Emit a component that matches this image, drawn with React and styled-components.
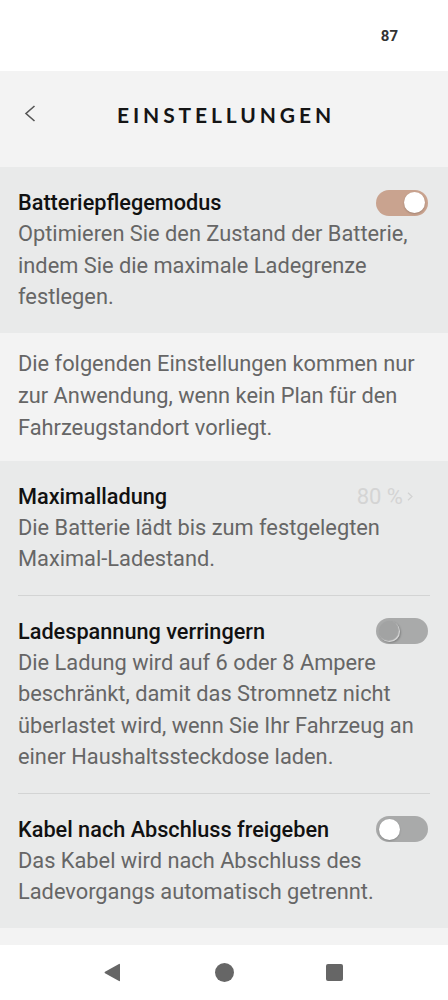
import styled, { createGlobalStyle } from 'styled-components'

const Global = createGlobalStyle`
  html, body {
    margin: 0;
    padding: 0;
    background: #ffffff;
  }
  body {
    font-family: Roboto, "Noto Sans", sans-serif;
    -webkit-font-smoothing: antialiased;
  }
`

const items = [
  {
    title: 'Maximalladung',
    text: 'Die Batterie lädt bis zum festgelegten Maximal-Ladestand.',
    value: '80 %',
  },
  {
    title: 'Ladespannung verringern',
    text: 'Die Ladung wird auf 6 oder 8 Ampere beschränkt, damit das Stromnetz nicht überlastet wird, wenn Sie Ihr Fahrzeug an einer Haushaltssteckdose laden.',
    toggle: 'busy',
  },
  {
    title: 'Kabel nach Abschluss freigeben',
    text: 'Das Kabel wird nach Abschluss des Ladevorgangs automatisch getrennt.',
    toggle: 'off',
  },
]

const Toggle = ({ state }) => (
  <S.Track state={state}>
    <S.Knob state={state} />
  </S.Track>
)

export default () => {
  return (
    <S.Page>
      <Global />
      <S.StatusBar>
        <S.Battery>87</S.Battery>
      </S.StatusBar>
      <S.Header>
        <S.Back>
          <svg width="12" height="17" viewBox="0 0 12 17">
            <path d="M10.5 1 L2 8.5 L10.5 16" fill="none" stroke="#555" strokeWidth="1.6" />
          </svg>
        </S.Back>
        <S.HeaderTitle>EINSTELLUNGEN</S.HeaderTitle>
      </S.Header>

      <S.Section>
        <S.Item>
          <S.Head>
            <S.Title>Batteriepflegemodus</S.Title>
            <Toggle state="on" />
          </S.Head>
          <S.Text>
            Optimieren Sie den Zustand der Batterie, indem Sie die maximale
            Ladegrenze festlegen.
          </S.Text>
        </S.Item>
      </S.Section>

      <S.Note>
        Die folgenden Einstellungen kommen nur zur Anwendung, wenn kein Plan für
        den Fahrzeugstandort vorliegt.
      </S.Note>

      <S.Section>
        {items.map((item, index) => (
          <S.Item key={item.title} divider={index > 0}>
            <S.Head>
              <S.Title>{item.title}</S.Title>
              {item.value && (
                <S.Value>
                  {item.value}
                  <svg width="6" height="9" viewBox="0 0 6 9">
                    <path d="M1 0.8 L5 4.5 L1 8.2" fill="none" stroke="#d2d2d2" strokeWidth="1.2" />
                  </svg>
                </S.Value>
              )}
              {item.toggle && <Toggle state={item.toggle} />}
            </S.Head>
            <S.Text>{item.text}</S.Text>
          </S.Item>
        ))}
      </S.Section>

      <S.Spacer />

      <S.NavBar>
        <svg width="19" height="19" viewBox="0 0 19 19">
          <path d="M17 1.5 L17 17.5 Q17 18.5 16 18 L2 10.3 Q1 9.5 2 8.7 L16 1 Q17 0.5 17 1.5 Z" fill="#666" />
        </svg>
        <S.HomeDot />
        <S.RecentSquare />
      </S.NavBar>
    </S.Page>
  )
}

const S = {
  Page: styled.div`
    width: 448px;
    height: 1000px;
    display: flex;
    flex-direction: column;
    background: #ffffff;
    overflow: hidden;
  `,
  StatusBar: styled.div`
    height: 71px;
    flex-shrink: 0;
    display: flex;
    justify-content: flex-end;
    align-items: center;
    padding-right: 50px;
    box-sizing: border-box;
  `,
  Battery: styled.span`
    font-size: 15px;
    font-weight: 700;
    color: #333;
    margin-top: 1px;
  `,
  Header: styled.div`
    height: 96px;
    flex-shrink: 0;
    background: #f3f3f3;
    display: flex;
    align-items: center;
    justify-content: center;
    position: relative;
    padding-bottom: 10px;
    box-sizing: border-box;
  `,
  Back: styled.div`
    position: absolute;
    left: 24px;
    top: 34px;
    display: flex;
  `,
  HeaderTitle: styled.h1`
    margin: 0 0 0 4px;
    font-family: Lato, "Liberation Sans", sans-serif;
    font-weight: 700;
    font-size: 21px;
    letter-spacing: 3.9px;
    color: #151515;
  `,
  Section: styled.div`
    background: #e9eaea;
    padding: 0 18px;
    flex-shrink: 0;
  `,
  Item: styled.div`
    padding: 20px 0 20px;
    border-top: ${(props) => (props.divider ? '1px solid #d3d4d4' : 'none')};
  `,
  Head: styled.div`
    display: flex;
    justify-content: space-between;
    align-items: center;
  `,
  Title: styled.div`
    font-size: 21.7px;
    font-weight: 500;
    line-height: 31px;
    color: #111;
  `,
  Text: styled.div`
    font-size: 21.8px;
    line-height: 31.5px;
    color: #666;
  `,
  Value: styled.div`
    display: flex;
    align-items: center;
    gap: 4px;
    font-size: 22px;
    color: #d4d4d4;
    margin-right: 17px;
  `,
  Track: styled.div`
    width: 52px;
    height: 26px;
    border-radius: 13px;
    margin-right: 2px;
    flex-shrink: 0;
    display: flex;
    align-items: center;
    justify-content: ${(props) => (props.state === 'on' ? 'flex-end' : 'flex-start')};
    padding: 0 3px;
    box-sizing: border-box;
    background: ${(props) => (props.state === 'on' ? '#c9a38f' : '#a9aaaa')};
  `,
  Knob: styled.div`
    width: 21px;
    height: 21px;
    border-radius: 50%;
    background: ${(props) => (props.state === 'busy' ? '#a2a3a3' : '#ffffff')};
    box-shadow: ${(props) =>
      props.state === 'busy'
        ? '1px 1px 2px rgba(0,0,0,0.25), inset -1px -1px 1px rgba(255,255,255,0.6)'
        : '0 1px 2px rgba(0,0,0,0.2)'};
  `,
  Note: styled.div`
    background: #f3f3f3;
    padding: 15px 18px 17px;
    font-size: 21.8px;
    line-height: 32px;
    color: #666;
    flex-shrink: 0;
  `,
  Spacer: styled.div`
    height: 17px;
    background: #f3f3f3;
    flex-shrink: 0;
  `,
  NavBar: styled.div`
    flex: 1;
    display: flex;
    align-items: center;
    justify-content: space-between;
    padding: 0 105px 0 103px;
    box-sizing: border-box;
  `,
  HomeDot: styled.div`
    width: 19px;
    height: 19px;
    border-radius: 50%;
    background: #666;
  `,
  RecentSquare: styled.div`
    width: 17px;
    height: 17px;
    border-radius: 2px;
    background: #666;
  `,
}
